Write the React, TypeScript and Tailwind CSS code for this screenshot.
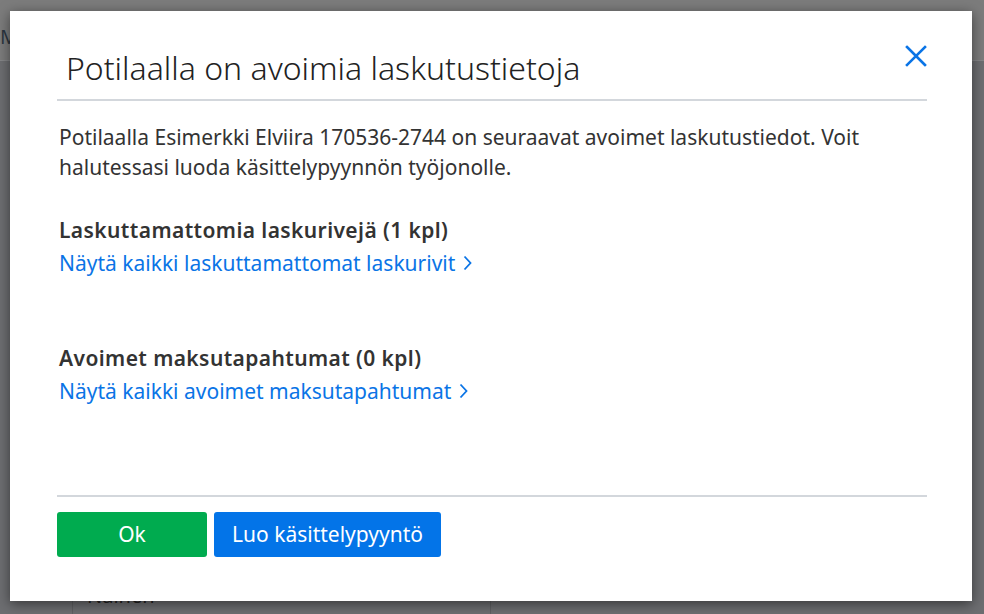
import React from "react";

export default function App() {
  const font = { fontFamily: "'Noto Sans', 'Open Sans', sans-serif" };
  return (
    <div className="relative h-[614px] w-[984px] overflow-hidden bg-[#6d6e71]" style={font}>
      {/* background page (dimmed) */}
      <div className="flex h-[61px] items-center border-b border-[#858688] bg-[#7c7c7c] pl-0 pt-[14px]">
        <span className="text-[20px] text-[#2c3640]">M</span>
      </div>
      <div className="flex h-[553px] pl-[72px]">
        <div className="mt-[520px] h-[40px] w-[419px] border-x border-[#5f6063] pl-[14px] text-[20px] text-[#222]">
          Nainen
        </div>
      </div>

      {/* modal dialog */}
      <div className="absolute left-[10px] top-[11px] flex h-[590px] w-[962px] flex-col bg-white pl-[47px] pr-[45px] shadow-[0_3px_12px_rgba(0,0,0,0.5)]">
        <div className="flex h-[90px] items-start justify-between border-b-2 border-[#d3d7dc] pl-[9px]">
          <h1 className="pt-[35px] text-[32px] font-light leading-[44px] text-[#222]">Potilaalla on avoimia laskutustietoja</h1>
          <button className="mt-[34px] text-[#0a74e6]">
            <svg width="22" height="22" viewBox="0 0 22 22" fill="none" stroke="currentColor" strokeWidth="2.6" strokeLinecap="square">
              <path d="M2 2 L20 20 M20 2 L2 20" />
            </svg>
          </button>
        </div>
        <div className="flex-1 pl-[2px] pt-[21px] text-[21px] leading-[30px] text-[#333]">
          <p>
            Potilaalla Esimerkki Elviira 170536-2744 on seuraavat avoimet laskutustiedot. Voit halutessasi luoda käsittelypyynnön työjonolle.
          </p>
          <div className="mt-[33px]">
            <div className="font-semibold tracking-[0.4px] text-[#333]">Laskuttamattomia laskurivejä (1 kpl)</div>
            <a className="mt-[3px] flex items-center gap-[8px] text-[#0a74e6]">
              Näytä kaikki laskuttamattomat laskurivit
              <svg width="9" height="16" viewBox="0 0 9 16" fill="none" stroke="currentColor" strokeWidth="1.8">
                <path d="M1.5 1.5 L7.5 8 L1.5 14.5" />
              </svg>
            </a>
          </div>
          <div className="mt-[65px]">
            <div className="font-semibold tracking-[0.4px] text-[#333]">Avoimet maksutapahtumat (0 kpl)</div>
            <a className="mt-[3px] flex items-center gap-[8px] text-[#0a74e6]">
              Näytä kaikki avoimet maksutapahtumat
              <svg width="9" height="16" viewBox="0 0 9 16" fill="none" stroke="currentColor" strokeWidth="1.8">
                <path d="M1.5 1.5 L7.5 8 L1.5 14.5" />
              </svg>
            </a>
          </div>
        </div>
        <div className="mb-[44px] flex gap-[7px] border-t-2 border-[#d3d7dc] pt-[15px]">
          <button className="h-[45px] w-[150px] rounded-[3px] bg-[#00ab4f] text-[21px] text-white">Ok</button>
          <button className="h-[45px] w-[227px] rounded-[3px] bg-[#0374e8] text-[21px] text-white">Luo käsittelypyyntö</button>
        </div>
      </div>
    </div>
  );
}
